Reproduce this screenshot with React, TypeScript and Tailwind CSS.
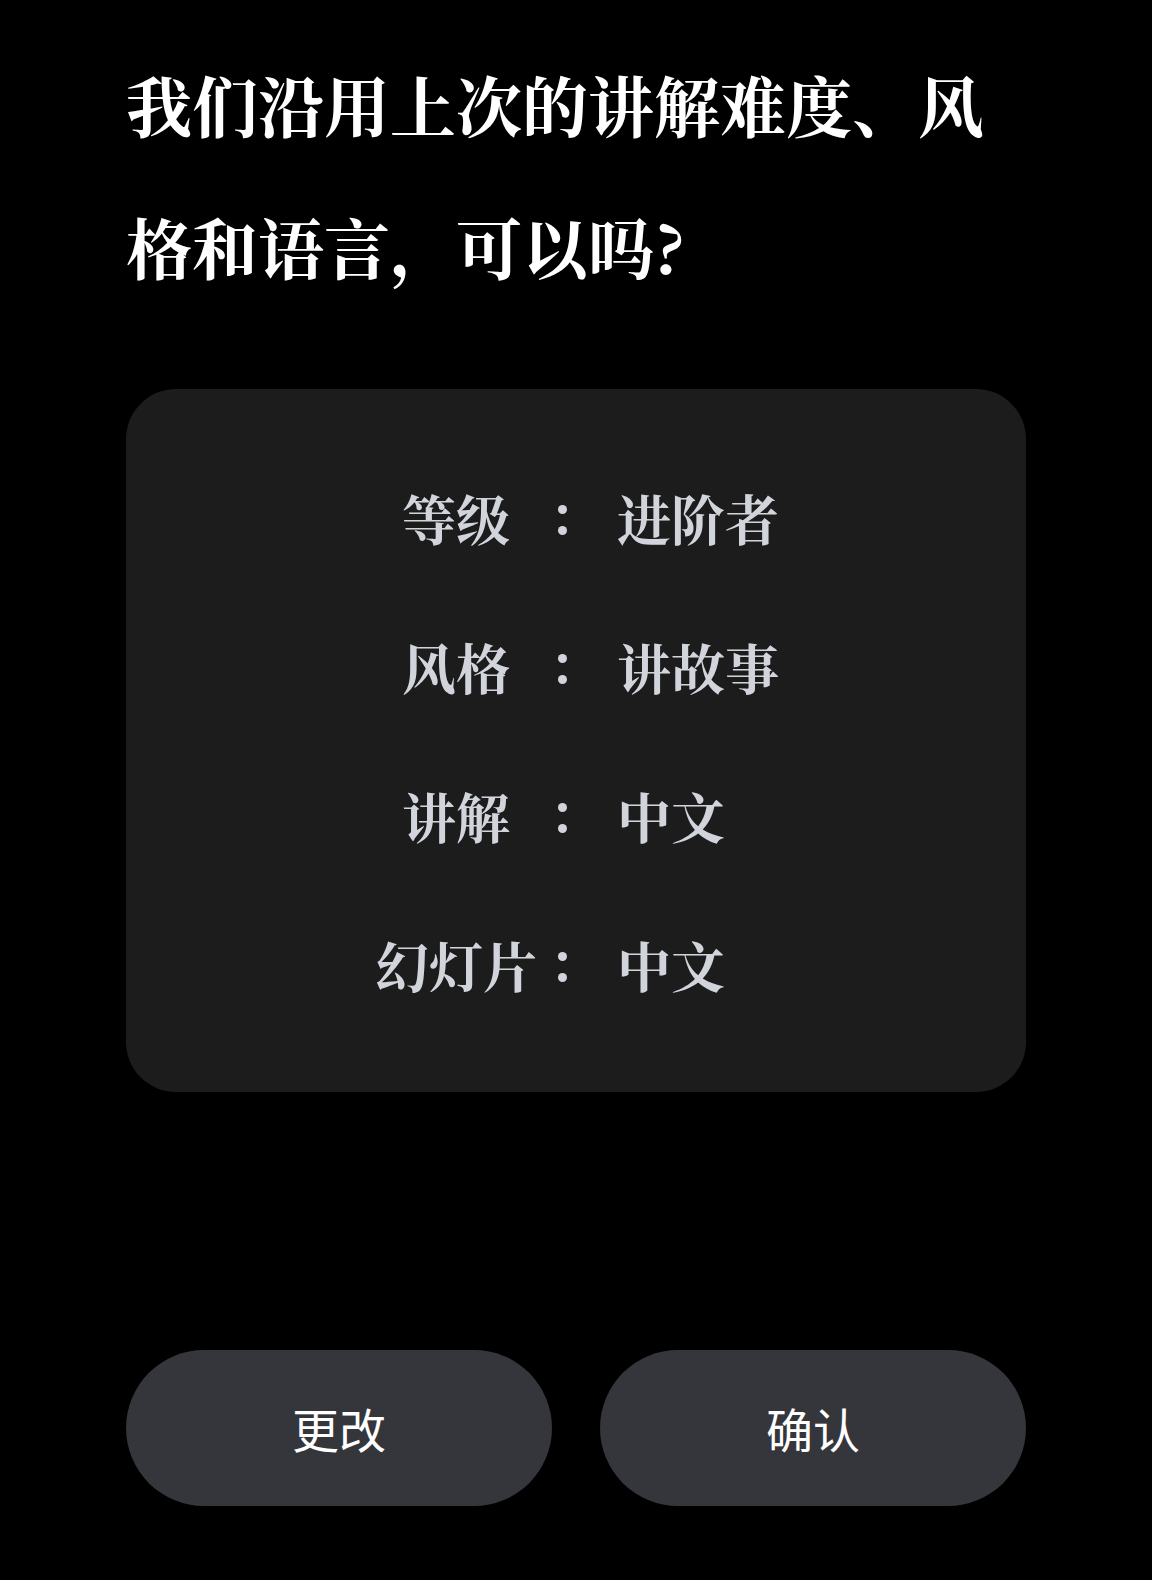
const serif = '"Noto Serif CJK SC", "Noto Serif SC", "Noto Sans CJK SC", serif';
const sans = '"Noto Sans CJK SC", "Noto Sans", sans-serif';

const rows = [
  { label: '等级', value: '进阶者' },
  { label: '风格', value: '讲故事' },
  { label: '讲解', value: '中文' },
  { label: '幻灯片', value: '中文' },
];

export default function App() {
  return (
    <div className="min-h-[1580px] w-full bg-black px-[126px] pt-[33px]">
      {/* Question */}
      <h1
        className="text-[66px] leading-[142px] font-bold text-white"
        style={{ fontFamily: serif }}
      >
        我们沿用上次的讲解难度、风格和语言，可以吗?
      </h1>

      {/* Settings card */}
      <div className="mt-[72px] rounded-[50px] bg-[#1c1c1d] pt-[54px] pb-[53px] pl-[244px]">
        <div
          className="grid grid-cols-[172px_40px_220px] text-[54px] leading-[149px] font-bold text-[#d1d5db]"
          style={{ fontFamily: serif }}
        >
          {rows.map((row) => (
            <div key={row.label} className="contents">
              <span className="text-center">{row.label}</span>
              <span className="flex items-center justify-center pt-[4px]">
                <span className="flex flex-col gap-[12px]">
                  <span className="block h-[9px] w-[9px] rounded-full bg-[#d1d5db]" />
                  <span className="block h-[9px] w-[9px] rounded-full bg-[#d1d5db]" />
                </span>
              </span>
              <span className="pl-[35px]">{row.value}</span>
            </div>
          ))}
        </div>
      </div>

      {/* Actions */}
      <div className="mt-[258px] grid grid-cols-2 gap-[48px]">
        <button
          className="h-[156px] rounded-full bg-[#35363b] text-[47px] text-white"
          style={{ fontFamily: sans }}
        >
          更改
        </button>
        <button
          className="h-[156px] rounded-full bg-[#35363b] text-[47px] text-white"
          style={{ fontFamily: sans }}
        >
          确认
        </button>
      </div>
    </div>
  );
}
